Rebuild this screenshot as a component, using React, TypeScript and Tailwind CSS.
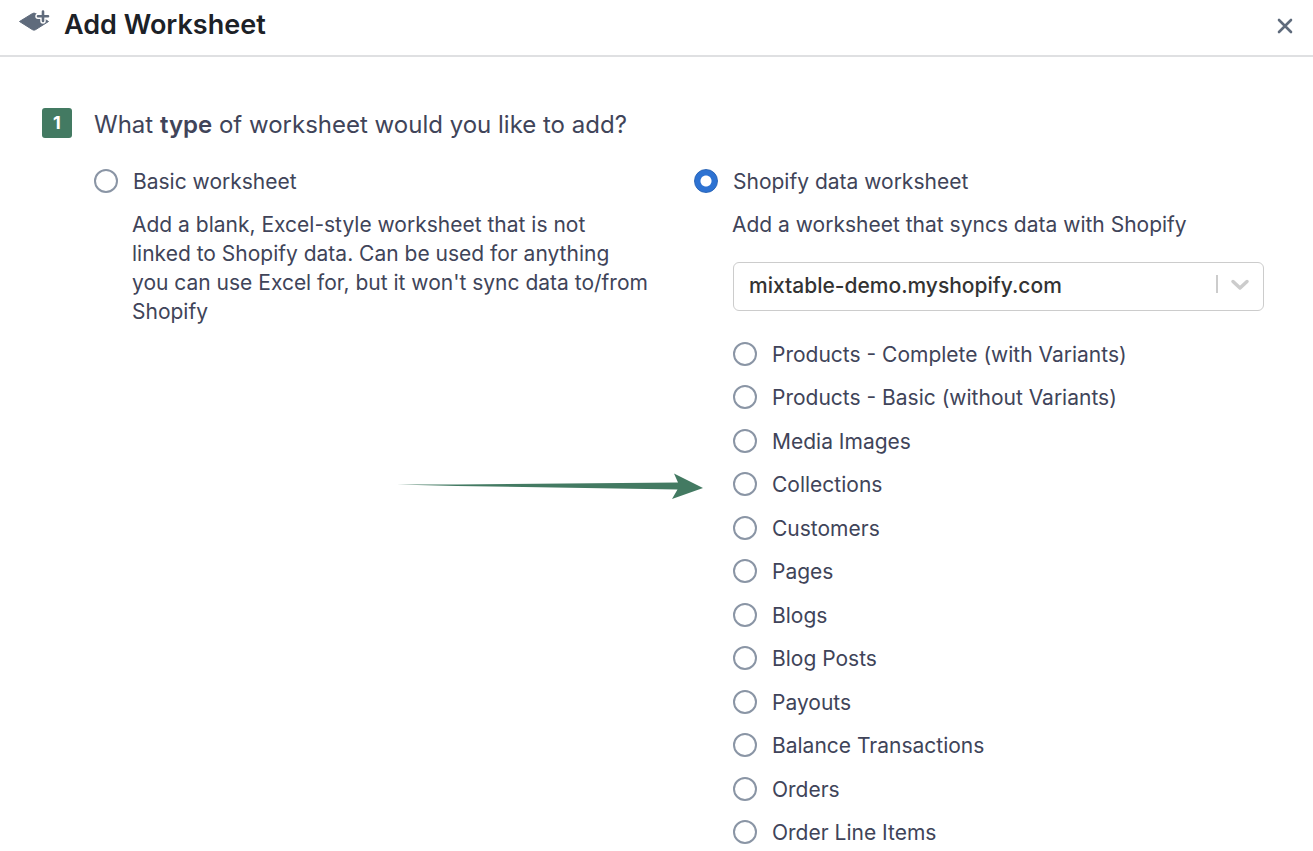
import { useState } from "react";

const SHEET_TYPES = [
  "Products - Complete (with Variants)",
  "Products - Basic (without Variants)",
  "Media Images",
  "Collections",
  "Customers",
  "Pages",
  "Blogs",
  "Blog Posts",
  "Payouts",
  "Balance Transactions",
  "Orders",
  "Order Line Items",
];

interface RadioProps {
  name: string;
  label: string;
  checked: boolean;
  onChange: () => void;
}

function Radio({ name, label, checked, onChange }: RadioProps) {
  return (
    <label className="flex h-6 items-center gap-[15px] text-[21px] leading-6">
      <input
        type="radio"
        name={name}
        checked={checked}
        onChange={onChange}
        className="size-6 shrink-0 appearance-none rounded-full border-2 border-[#8a95a5] bg-white checked:border checked:border-[#2b66b8] checked:bg-[radial-gradient(circle,#fff_5px,#2d72d2_6px)]"
      />
      <span className="pt-0.5">{label}</span>
    </label>
  );
}

function NewLayerIcon() {
  return (
    <svg viewBox="0 0 32 24" className="h-6 w-8" fill="none" aria-hidden="true">
      <path d="M1.500 13.500 L14.500 5.500 Q16 4.700 17.500 5.500 L30.500 13.500 L17.500 21.700 Q16 22.600 14.500 21.700 Z" fill="#5f6b7c" stroke="#5f6b7c" strokeWidth="1" strokeLinejoin="round" />
      <path d="M25 3.500v9.500M20 8.200h10" stroke="#fff" strokeWidth="5.500" strokeLinecap="round" />
      <path d="M25 3.500v9.500M20 8.200h10" stroke="#5f6b7c" strokeWidth="2.600" strokeLinecap="round" />
    </svg>
  );
}

export default function App() {
  const [kind, setKind] = useState("shopify");
  const [sheet, setSheet] = useState("");

  return (
    <div className="min-h-screen bg-white font-['Inter',sans-serif] text-[#404459]">
      <header className="flex h-[57px] items-start border-b-2 border-[#dfe0e2] pt-2 pr-4 pl-[18px]">
        <NewLayerIcon />
        <h1 className="ml-3.5 flex-1 text-[27px] leading-[34px] font-semibold text-[#1c2127]">Add Worksheet</h1>
        <button type="button" aria-label="Close" className="mt-1.5 p-1 text-[#5f6b7c]">
          <svg viewBox="0 0 16 16" className="size-4" fill="none" stroke="currentColor" strokeWidth="2.600" strokeLinecap="round">
            <path d="M2 2l12 12M14 2L2 14" />
          </svg>
        </button>
      </header>

      <main className="flex gap-[22px] pt-[51px] pr-[49px] pl-[42px]">
        <div className="flex size-[30px] shrink-0 items-center justify-center rounded-[3px] bg-[#437a62] text-lg font-bold text-white">1</div>
        <div className="min-w-0 flex-1">
          <h2 className="text-2xl leading-[34px] font-normal">
            What <strong className="font-semibold">type</strong> of worksheet would you like to add?
          </h2>

          <div className="relative mt-[27px] grid grid-cols-[570px_1fr] gap-x-[30px]">
            <section>
              <Radio name="kind" label="Basic worksheet" checked={kind === "basic"} onChange={() => setKind("basic")} />
              <p className="mt-[17px] pr-4 pl-[38px] text-[21px] leading-[29px]">
                Add a blank, Excel-style worksheet that is not linked to Shopify data. Can be used for anything you can use Excel for, but it won't sync data to/from Shopify
              </p>
            </section>

            <section>
              <Radio name="kind" label="Shopify data worksheet" checked={kind === "shopify"} onChange={() => setKind("shopify")} />
              <p className="mt-[17px] pl-[38px] text-[21px] leading-[29px]">Add a worksheet that syncs data with Shopify</p>
              <div className="relative mt-[23px] ml-[39px]">
                <select
                  aria-label="Shopify store"
                  className="h-[49px] w-full appearance-none rounded-md border border-[#ccc] bg-white pr-14 pb-0.5 pl-[15px] text-[21px] font-medium text-[#333]"
                >
                  <option>mixtable-demo.myshopify.com</option>
                </select>
                <svg viewBox="0 0 36 20" className="pointer-events-none absolute top-3 right-3 h-5 w-9" fill="none" stroke="#ccc" aria-hidden="true">
                  <path d="M1 1v18" strokeWidth="2" />
                  <path d="M17 7.500l7 6.500 7-6.500" strokeWidth="3.500" strokeLinecap="round" strokeLinejoin="round" />
                </svg>
              </div>
              <fieldset className="mt-[31px] ml-[39px] flex h-[502px] flex-col justify-between">
                {SHEET_TYPES.map((type) => (
                  <Radio key={type} name="sheet" label={type} checked={sheet === type} onChange={() => setSheet(type)} />
                ))}
              </fieldset>
            </section>

            <svg viewBox="0 0 308 28" className="pointer-events-none absolute top-[303px] left-[303px] h-7 w-[308px]" aria-hidden="true">
              <path d="M0 12.500 L60 12.500 L281 10.500 L277 1.500 L306 16 L275 27 L280.500 17.500 L60 14 Z" fill="#437a62" />
            </svg>
          </div>
        </div>
      </main>
    </div>
  );
}
